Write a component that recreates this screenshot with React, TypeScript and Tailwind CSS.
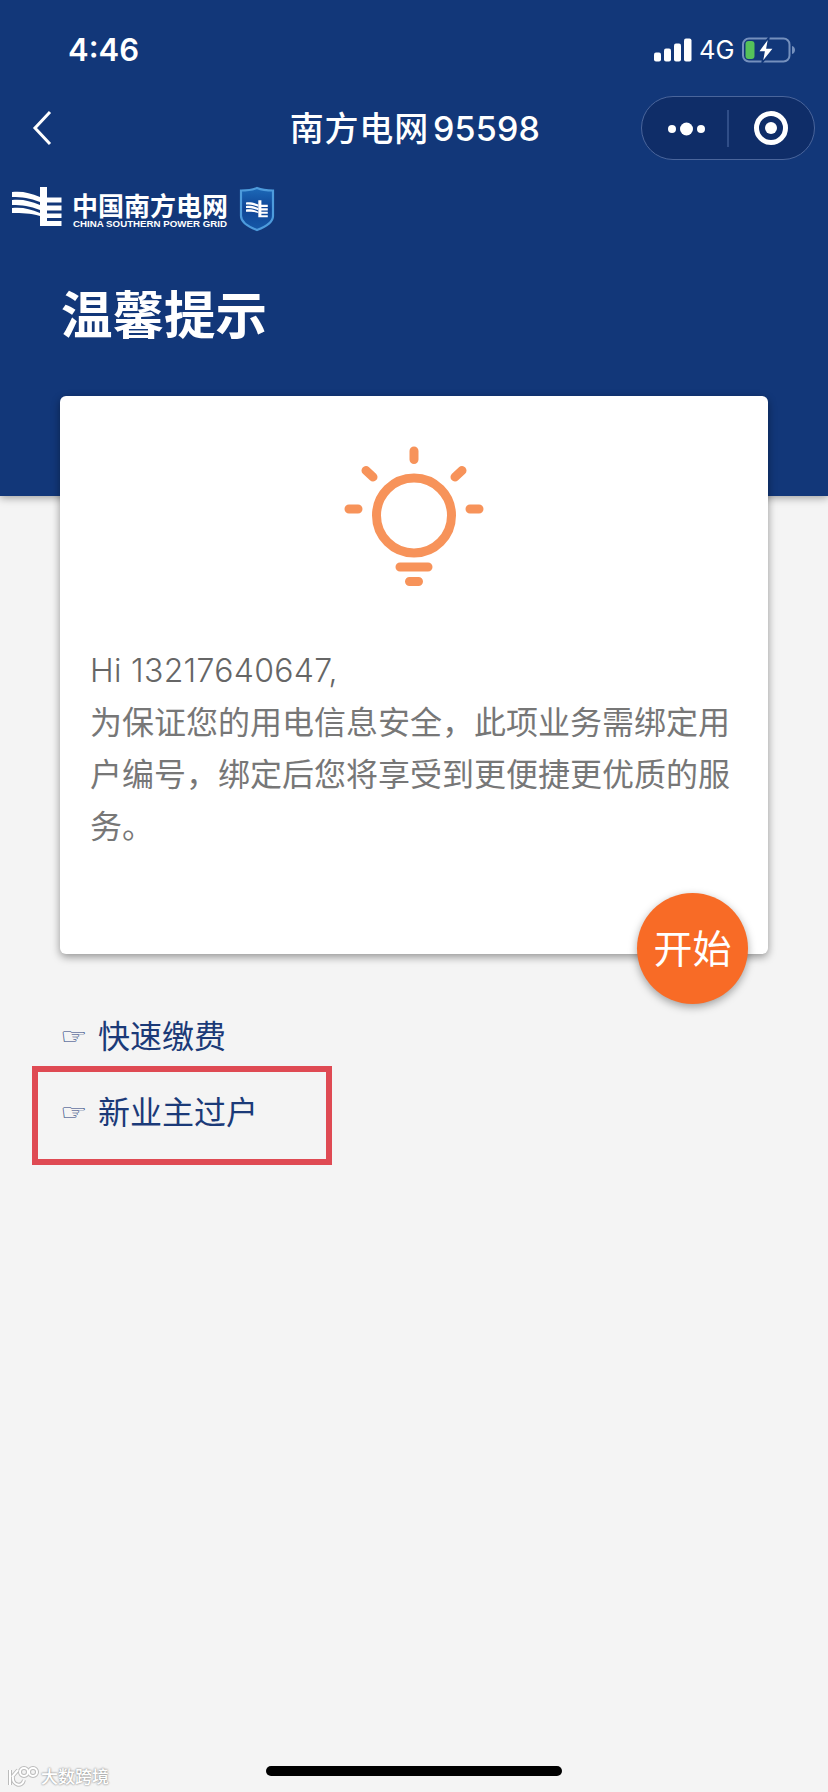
import React from 'react';

const links = [
  { label: '快速缴费', highlighted: false },
  { label: '新业主过户', highlighted: true },
];

const GridMark: React.FC<{ className?: string }> = ({ className }) => (
  <svg viewBox="0 0 50 40" className={className} fill="currentColor">
    <path d="M0 5 C11 4 18 6 28 10 V15 C18 11 10 10 0 10 Z" />
    <path d="M0 13 C11 12 18 14 28 18 V23 C18 19 10 18 0 18 Z" />
    <path d="M0 21 C11 20 18 22 28 26 V29 C18 26 10 26 0 26 Z" />
    <path d="M28 0 H35 V10.500 H49.500 V15.500 H35 V18.500 H49.500 V23.500 H35 V26.500 H49.500 V31 H35 V34 H49.500 V39 H28 Z" />
  </svg>
);

const StatusBar: React.FC = () => (
  <div className="flex h-[92px] items-start justify-between pt-[30px] pr-8 pl-[68px]">
    <span className="text-[31px] leading-10 font-semibold">4:46</span>
    <div className="flex h-10 items-center">
      <svg viewBox="0 0 38 24" className="mr-[7px] h-6 w-[38px]" fill="currentColor">
        <rect x="0" y="14.500" width="7" height="9" rx="2" />
        <rect x="10" y="10.500" width="7" height="13" rx="2" />
        <rect x="20" y="5.500" width="7" height="18" rx="2" />
        <rect x="30" y="0.500" width="7.500" height="23" rx="2" />
      </svg>
      <span className="mr-[7px] w-9 text-[25.500px] leading-10">4G</span>
      <svg viewBox="0 0 54 26" className="h-[26px] w-[54px]">
        <rect x="1" y="1.500" width="46.500" height="23" rx="6" fill="none" stroke="#7590bd" strokeWidth="2" />
        <path d="M50 9 C54 10 54 16 50 17 Z" fill="#7590bd" />
        <rect x="3.500" y="4" width="9" height="18" rx="3" fill="#55c25a" />
        <path d="M27 0 L16 15 H22 L20 26 L32 11 H25 Z" fill="#fff" stroke="#123779" strokeWidth="1.500" />
      </svg>
    </div>
  </div>
);

const NavBar: React.FC = () => (
  <div className="flex h-[72px] items-center justify-between pr-[13px] pl-8">
    <svg viewBox="0 0 20 36" className="h-9 w-5" fill="none" stroke="currentColor" strokeWidth="3">
      <path d="M18 2 L3 18 L18 34" />
    </svg>
    <h1 className="ml-[137px] text-[34px] font-medium whitespace-nowrap">
      <span className="tracking-[0.8px]">南方电网</span>
      <span className="ml-1 tracking-[0.2px]">95598</span>
    </h1>
    <div className="flex h-16 w-[174px] items-center rounded-full border border-[#4a659b] bg-[#0f2d68]">
      <svg viewBox="0 0 172 62" className="h-full w-full" fill="currentColor">
        <circle cx="30" cy="32" r="4" />
        <circle cx="44.500" cy="32" r="6.500" />
        <circle cx="59" cy="32" r="4" />
        <path d="M86 13 V50" stroke="#3d5a93" strokeWidth="1.500" />
        <circle cx="129" cy="31" r="14.500" fill="none" stroke="currentColor" strokeWidth="5" />
        <circle cx="129" cy="31" r="6" />
      </svg>
    </div>
  </div>
);

const Brand: React.FC = () => (
  <div className="flex h-[90px] items-start pt-[22px] pl-3">
    <GridMark className="mt-px h-10 w-[50px]" />
    <div className="ml-[10px] w-[156px]">
      <p className="pt-[5px] text-[26px] leading-8 font-bold whitespace-nowrap">中国南方电网</p>
      <svg viewBox="0 0 156 10" className="-mt-[5px] h-2.5 w-[156px]" fill="currentColor">
        <text x="1" y="9" fontSize="8.500" fontWeight="700" fontFamily="Liberation Sans" textLength="154" lengthAdjust="spacingAndGlyphs">
          CHINA SOUTHERN POWER GRID
        </text>
      </svg>
    </div>
    <div className="relative ml-[11px] h-[46px] w-[36px]">
      <svg viewBox="0 0 36 46" className="h-full w-full">
        <defs>
          <linearGradient id="shield" x1="0" y1="0" x2="0" y2="1">
            <stop offset="0" stopColor="#1c69b8" />
            <stop offset="0.5" stopColor="#0f4596" />
            <stop offset="1" stopColor="#1659a8" />
          </linearGradient>
        </defs>
        <path d="M18 2 C23 4 28 4.500 34 4.500 V30 C34 36 26 41 18 44 C10 41 2 36 2 30 V4.500 C8 4.500 13 4 18 2 Z" fill="url(#shield)" stroke="#4d9bdc" strokeWidth="2.200" />
      </svg>
      <GridMark className="absolute top-[14px] left-[7px] h-[18px] w-[22px]" />
    </div>
  </div>
);

const BulbIcon: React.FC = () => (
  <svg viewBox="0 0 140 144" className="h-[144px] w-[140px]" fill="none" stroke="#f7935a" strokeLinecap="round" strokeWidth="9">
    <circle cx="70" cy="72.500" r="37.500" />
    <path d="M70 8 V16.500 M22 27.500 L29 34 M118 27.500 L111 34 M5 66 H14 M126 66 H135" />
    <path d="M56 124 H84 M65.500 138.500 H74.500" />
  </svg>
);

const App: React.FC = () => (
  <main className="relative h-[1792px] w-[828px] overflow-hidden bg-[#f4f4f4] font-[Inter,'Noto_Sans_CJK_SC',sans-serif]">
    <header className="h-[496px] bg-[#123779] text-white shadow-[0_2px_8px_rgba(0,0,0,0.35)]">
      <StatusBar />
      <NavBar />
      <Brand />
      <h2 className="pt-[3px] pl-[61px] text-[51.500px] leading-[116px] font-bold">温馨提示</h2>
    </header>

    <section className="relative mx-[60px] -mt-[100px] h-[558px] rounded-md bg-white px-[30px] pt-[47px] shadow-[0_3px_9px_rgba(0,0,0,0.4)]">
      <div className="flex justify-center">
        <BulbIcon />
      </div>
      <div className="mt-[58px] text-[32px] leading-[52px] whitespace-nowrap text-[#777]">
        <p className="font-light text-[#666] tracking-[0.3px]">Hi 13217640647,</p>
        <p>为保证您的用电信息安全，此项业务需绑定用</p>
        <p>户编号，绑定后您将享受到更便捷更优质的服</p>
        <p>务。</p>
      </div>
      <button
        type="button"
        className="absolute right-5 -bottom-[50px] h-[111px] w-[111px] rounded-full bg-[#f86b26] pt-0.5 text-[39px] text-white shadow-[0_3px_9px_rgba(0,0,0,0.35)]"
      >
        开始
      </button>
    </section>

    <nav className="mt-11 flex flex-col pl-8 text-[#1b3a78]">
      {links.map(({ label, highlighted }) => (
        <a
          key={label}
          href="#"
          className={
            highlighted
              ? 'flex h-[99px] w-[300px] items-start border-[6px] border-[#df4a53] pt-[15px] pl-[22px]'
              : 'flex h-[68px] w-[299px] items-start pt-[13px] pl-7'
          }
        >
          <span className="w-[38px] origin-left scale-x-110 scale-y-80 font-['DejaVu_Sans'] text-[28px] leading-[52px]">☞</span>
          <span className="text-[32px] leading-[52px] whitespace-nowrap">{label}</span>
        </a>
      ))}
    </nav>

    <div className="absolute bottom-4 left-[266px] h-[10px] w-[296px] rounded-full bg-black" />

    <div className="absolute bottom-[3px] left-2 flex items-center text-white [text-shadow:0_0_2px_#999,0_0_2px_#999]">
      <svg viewBox="0 0 30 22" className="h-[22px] w-[30px] overflow-visible" fill="none">
        <g stroke="#bcbcbc" strokeWidth="4">
          <path d="M2 4 V19 M10 4 L4 11 M16 14 C14 22 4 19 5 11" />
          <circle cx="16" cy="6" r="4" />
          <circle cx="25" cy="6" r="4" />
        </g>
        <g stroke="#fff" strokeWidth="2">
          <path d="M2 4 V19 M10 4 L4 11 M16 14 C14 22 4 19 5 11" />
          <circle cx="16" cy="6" r="4" />
          <circle cx="25" cy="6" r="4" />
        </g>
      </svg>
      <span className="ml-[3px] text-[17px] leading-6 font-medium">大数跨境</span>
    </div>
  </main>
);

export default App;
